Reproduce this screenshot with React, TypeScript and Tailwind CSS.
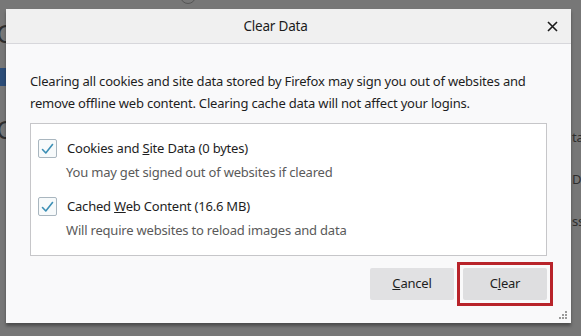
import React from 'react';

function Check() {
  return (
    <span className="flex h-[19px] w-[19px] items-center justify-center rounded-[2px] border border-[#a9b6bf] bg-[#f7fafb]">
      <svg width="13" height="12" viewBox="0 0 13 12" fill="none">
        <path d="M1.5 6.5 L4.8 10 L11.5 1.5" stroke="#3c8fb5" strokeWidth="1.6" strokeLinecap="round" strokeLinejoin="round" />
      </svg>
    </span>
  );
}

function Option({ label, sub }: { label: React.ReactNode; sub: string }) {
  return (
    <div className="flex flex-col">
      <div className="flex h-[19px] items-center gap-[10px]">
        <Check />
        <span className="text-[13px] text-[#1e1e1e]">{label}</span>
      </div>
      <div className="ml-[28px] mt-[3px] text-[13px] leading-[22px] text-[#5a5a5a]">{sub}</div>
    </div>
  );
}

export default function App() {
  return (
    <div className="relative h-[336px] w-[581px] overflow-hidden bg-[#777777] tracking-[-0.2px]" style={{ fontFamily: '"Noto Sans", "Open Sans", sans-serif' }}>
      {/* faint page behind the overlay */}
      <div className="absolute left-[-4px] top-[14px] text-[26px] text-[#2e2e2e]">C</div>
      <div className="absolute left-0 top-[68px] h-[18px] w-[6px] bg-[#2c4d78]" />
      <div className="absolute left-[-4px] top-[110px] text-[26px] text-[#2e2e2e]">C</div>
      <div className="absolute left-[572px] top-[128px] text-[13px] text-[#2e2e2e]">ta</div>
      <div className="absolute left-[572px] top-[170px] text-[13px] text-[#2e2e2e]">Da</div>
      <div className="absolute left-[572px] top-[212px] text-[13px] text-[#2e2e2e]">ss</div>
      <div className="absolute left-[180px] top-[-12px] h-[16px] w-[16px] rounded-full border border-[#555]" />

      <div className="absolute left-[6px] top-[9px] flex h-[314px] w-[565px] flex-col bg-[#f9f9fa] shadow-[0_3px_3px_rgba(0,0,0,0.35)]">
        <div className="relative flex h-[35px] items-center justify-center border-b border-[#d7d7db] bg-[#f0f0f0] pr-[26px]">
          <span className="text-[13.5px] text-[#1b1b1b]">Clear Data</span>
          <svg className="absolute right-[13px] top-[12px]" width="11" height="11" viewBox="0 0 11 11">
            <path d="M1 1 L10 10 M10 1 L1 10" stroke="#1b1b1b" strokeWidth="1.6" />
          </svg>
        </div>

        <div className="flex flex-1 flex-col px-[24px] pt-[26px]">
          <p className="text-[13px] leading-[22px] text-[#1e1e1e]">
            Clearing all cookies and site data stored by Firefox may sign you out of websites and remove offline web content. Clearing cache data will not affect your logins.
          </p>
          <div className="mt-[9px] flex h-[133px] flex-col gap-[14px] border border-[#c6c6c9] bg-white px-[7px] pt-[15px]">
            <Option label={<>Cookies and <u>S</u>ite Data (0 bytes)</>} sub="You may get signed out of websites if cleared" />
            <Option label={<>Cached <u>W</u>eb Content (16.6 MB)</>} sub="Will require websites to reload images and data" />
          </div>
          <div className="mt-[12px] flex justify-end gap-[9px]">
            <button className="h-[32px] w-[84px] rounded-[2px] bg-[#e1e1e3] text-[13px] text-[#1e1e1e]">
              <u>C</u>ancel
            </button>
            <div className="-m-[6px] border-[3px] border-[#b8232a] p-[3px]">
              <button className="h-[32px] w-[84px] rounded-[2px] bg-[#dedee0] text-[13px] text-[#1e1e1e]">
                C<u>l</u>ear
              </button>
            </div>
          </div>
        </div>
        <svg className="absolute bottom-[3px] right-[3px]" width="9" height="9" viewBox="0 0 9 9">
          <g fill="#9a9a9a">
            <rect x="6" y="0" width="2" height="2" />
            <rect x="3" y="3" width="2" height="2" />
            <rect x="6" y="3" width="2" height="2" />
            <rect x="0" y="6" width="2" height="2" />
            <rect x="3" y="6" width="2" height="2" />
            <rect x="6" y="6" width="2" height="2" />
          </g>
        </svg>
      </div>
    </div>
  );
}
